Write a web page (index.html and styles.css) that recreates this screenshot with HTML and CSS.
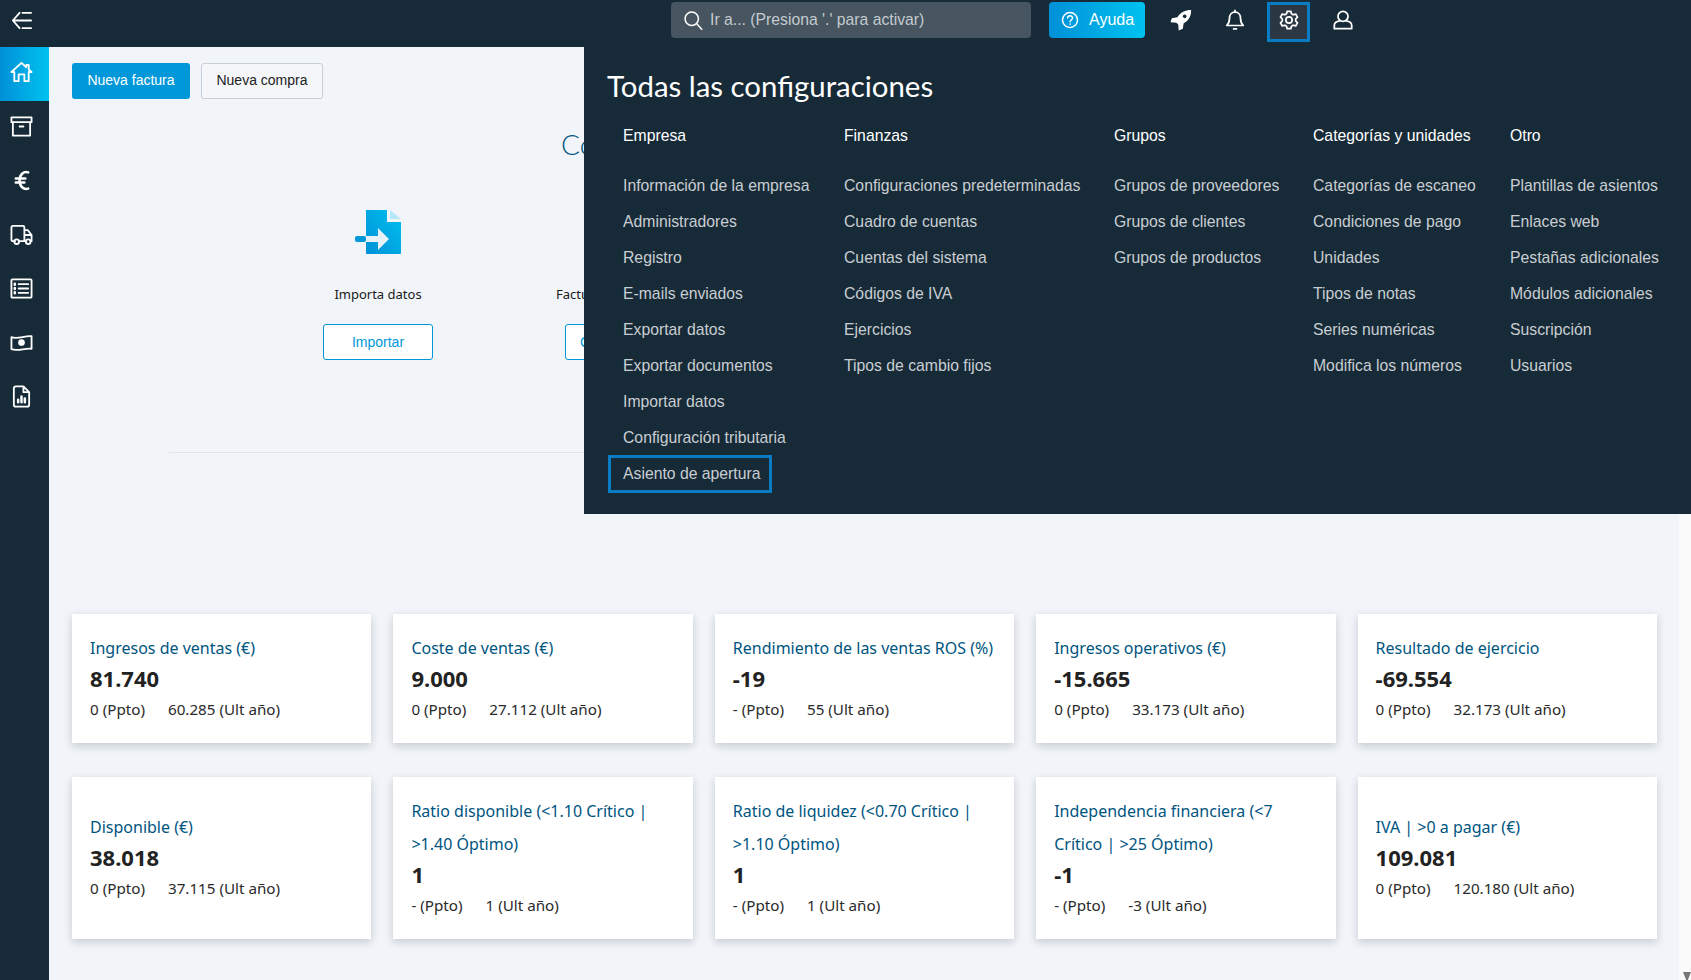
FILE: index.html
```html
<!DOCTYPE html>
<html lang="es">
<head>
  <meta charset="UTF-8" />
  <title>Inicio</title>
  <link rel="stylesheet" href="styles.css">
</head>
<body>
  <header class="topbar">
    <button class="toggle" aria-label="Menu">
      <svg class="icon" viewBox="0 0 24 24"><path d="M10 4 3 12l7 8M3 12h19M13 4h9M13 20h9"/></svg>
    </button>
    <div class="search">
      <svg class="search-icon" viewBox="0 0 24 24"><circle cx="10.5" cy="10.5" r="8"/><path d="m16.5 16.5 6 6.5"/></svg>
      <span>Ir a... (Presiona '.' para activar)</span>
    </div>
    <button class="help">
      <svg class="help-icon" viewBox="0 0 24 24"><circle cx="12" cy="12" r="10"/><path d="M8.800 9.400c0-4.200 6.600-4.200 6.600 0 0 2.600-3.300 2.600-3.300 5"/><path d="M12.100 17.200v.6"/></svg>
      Ayuda
    </button>
    <div class="top-icons">
      <div class="top-icon">
        <svg class="icon" viewBox="0 0 24 24"><path class="solid" d="M23 1c-6.500 0-11.500 2.500-15 8L2 10 .5 14.500l6.500.5 2 2 .5 6.500 4.500-2 .8-5.800C20.500 12.500 23.300 7.500 23 1Z"/><circle class="hole" cx="16" cy="8" r="2"/></svg>
      </div>
      <div class="top-icon">
        <svg class="icon" viewBox="0 0 24 24"><path d="M12 3.500c-4 0-6 3-6 6.500 0 4-1 6-3 8h18c-2-2-3-4-3-8 0-3.500-2-6.500-6-6.500ZM12 1.500v2M10.500 21.800h3"/></svg>
      </div>
      <div class="top-icon focused">
        <svg class="icon" viewBox="0 0 24 24"><circle cx="12" cy="12" r="3.400"/><path d="m10 2.500-.7 2.700-1.900 1.100-2.700-.8-2 3.400 2 2v2.200l-2 2 2 3.400 2.700-.8 1.900 1.100.7 2.700h4l.7-2.700 1.900-1.100 2.700.8 2-3.400-2-2v-2.200l2-2-2-3.400-2.700.8-1.900-1.100-.7-2.700Z"/></svg>
      </div>
      <div class="top-icon">
        <svg class="icon" viewBox="0 0 24 24"><circle cx="12" cy="8" r="5.500"/><path d="M8.500 13c-3.500.5-6 2-6 5v3.500h19V18c0-3-2.500-4.500-6-5"/></svg>
      </div>
    </div>
  </header>

  <div class="layout">
    <nav class="sidebar">
      <a class="side-item active"><svg class="icon" viewBox="0 0 24 24"><path d="M1.500 11.500 12 2l5 4.500V4h2.500v4.700l3 2.800h-3V21H15v-7H9v7H4.500v-9.500Z"/></svg></a>
      <a class="side-item"><svg class="icon" viewBox="0 0 24 24"><path d="M1.500 2.500h21v5h-21ZM3 7.500v14h18v-14M10 12h4"/></svg></a>
      <a class="side-item"><svg class="icon" viewBox="0 0 24 24"><path class="thick" d="M19 3.500C14 2 10 6 10 12s4 10 9 8.500M6 10h10M6 14h9"/></svg></a>
      <a class="side-item"><svg class="icon" viewBox="0 0 24 24"><path d="M5 19H3a1.500 1.500 0 0 1-1.500-1.500v-13A1.500 1.500 0 0 1 3 3h10.500A1.500 1.500 0 0 1 15 4.500V19H9.500M15 7.500h3.500l4 5V19h-1M15 12.500h7.500M15 19h2"/><circle cx="7" cy="19.500" r="2.400"/><circle cx="19" cy="19.500" r="2.400"/></svg></a>
      <a class="side-item"><svg class="icon" viewBox="0 0 24 24"><rect x="1.500" y="2.500" width="21" height="19" rx="1"/><path d="M9 7.500h10M9 12h10M9 16.500h10"/><path class="thick" d="M5 7v1M5 11.500v1M5 16v1"/></svg></a>
      <a class="side-item"><svg class="icon" viewBox="0 0 24 24"><path d="M1.500 6.500c7 2.500 14-2 21-1v13c-7-1-14 3-21 .5Z"/><circle class="solid" cx="12" cy="12" r="3.500"/></svg></a>
      <a class="side-item"><svg class="icon" viewBox="0 0 24 24"><path d="M14 1.500H6A2 2 0 0 0 4 3.500v17a2 2 0 0 0 2 2h12a2 2 0 0 0 2-2V7.500ZM14 1.500v6h6"/><path class="thick" d="M8.500 18v-2.500M12 18v-6M15.500 18v-4"/></svg></a>
    </nav>

    <main class="content">
      <div class="actions">
        <button class="btn-primary">Nueva factura</button>
        <button class="btn-plain">Nueva compra</button>
      </div>

      <h1 class="welcome">Co</h1>

      <div class="steps">
        <div class="step">
          <svg class="step-icon" viewBox="0 0 46 44">
            <defs>
              <linearGradient id="stepBlue" x1="0" y1="1" x2="1" y2="0">
                <stop offset="0" stop-color="#0090d7"/>
                <stop offset="1" stop-color="#00c2ef"/>
              </linearGradient>
            </defs>
            <path fill="url(#stepBlue)" d="M13 0h19v12h14v31a1 1 0 0 1-1 1H12a1 1 0 0 1-1-1V1a1 1 0 0 1 2-1Z"/>
            <path fill="#b5e8f8" d="M35 0l11 9H35Z"/>
            <rect fill="#0098d9" x="0" y="26" width="11" height="6" rx="2"/>
            <path fill="#e6f2f8" d="M11 26h12v-8l11 11-11 11v-8H11Z"/>
          </svg>
          <p>Importa datos</p>
          <button class="btn-outline">Importar</button>
        </div>
        <div class="step step-cut">
          <svg class="step-icon" viewBox="0 0 46 44"></svg>
          <p>Factura</p>
          <button class="btn-outline">Crear</button>
        </div>
        <div class="step"></div>
        <div class="step"></div>
        <div class="step"></div>
      </div>

      <hr class="divider">

      <section class="cards">
        <article class="card"><h3>Ingresos de ventas (€)</h3><strong>81.740</strong><p><span>0 (Ppto)</span><span>60.285 (Ult año)</span></p></article>
        <article class="card"><h3>Coste de ventas (€)</h3><strong>9.000</strong><p><span>0 (Ppto)</span><span>27.112 (Ult año)</span></p></article>
        <article class="card"><h3>Rendimiento de las ventas ROS (%)</h3><strong>-19</strong><p><span>- (Ppto)</span><span>55 (Ult año)</span></p></article>
        <article class="card"><h3>Ingresos operativos (€)</h3><strong>-15.665</strong><p><span>0 (Ppto)</span><span>33.173 (Ult año)</span></p></article>
        <article class="card"><h3>Resultado de ejercicio</h3><strong>-69.554</strong><p><span>0 (Ppto)</span><span>32.173 (Ult año)</span></p></article>
        <article class="card"><h3>Disponible (€)</h3><strong>38.018</strong><p><span>0 (Ppto)</span><span>37.115 (Ult año)</span></p></article>
        <article class="card"><h3>Ratio disponible (&lt;1.10 Crítico | &gt;1.40 Óptimo)</h3><strong>1</strong><p><span>- (Ppto)</span><span>1 (Ult año)</span></p></article>
        <article class="card"><h3>Ratio de liquidez (&lt;0.70 Crítico | &gt;1.10 Óptimo)</h3><strong>1</strong><p><span>- (Ppto)</span><span>1 (Ult año)</span></p></article>
        <article class="card"><h3>Independencia financiera (&lt;7 Crítico | &gt;25 Óptimo)</h3><strong>-1</strong><p><span>- (Ppto)</span><span>-3 (Ult año)</span></p></article>
        <article class="card"><h3>IVA | &gt;0 a pagar (€)</h3><strong>109.081</strong><p><span>0 (Ppto)</span><span>120.180 (Ult año)</span></p></article>
      </section>
    </main>

    <div class="scrollbar"><span class="scroll-down"></span></div>
  </div>

  <!-- settings menu, opened from the gear icon -->
  <div class="settings-menu">
    <h2>Todas las configuraciones</h2>
    <div class="settings-cols">
      <ul>
        <li class="col-head">Empresa</li>
        <li>Información de la empresa</li>
        <li>Administradores</li>
        <li>Registro</li>
        <li>E-mails enviados</li>
        <li>Exportar datos</li>
        <li>Exportar documentos</li>
        <li>Importar datos</li>
        <li>Configuración tributaria</li>
        <li class="focused-item">Asiento de apertura</li>
      </ul>
      <ul>
        <li class="col-head">Finanzas</li>
        <li>Configuraciones predeterminadas</li>
        <li>Cuadro de cuentas</li>
        <li>Cuentas del sistema</li>
        <li>Códigos de IVA</li>
        <li>Ejercicios</li>
        <li>Tipos de cambio fijos</li>
      </ul>
      <ul>
        <li class="col-head">Grupos</li>
        <li>Grupos de proveedores</li>
        <li>Grupos de clientes</li>
        <li>Grupos de productos</li>
      </ul>
      <ul>
        <li class="col-head">Categorías y unidades</li>
        <li>Categorías de escaneo</li>
        <li>Condiciones de pago</li>
        <li>Unidades</li>
        <li>Tipos de notas</li>
        <li>Series numéricas</li>
        <li>Modifica los números</li>
      </ul>
      <ul>
        <li class="col-head">Otro</li>
        <li>Plantillas de asientos</li>
        <li>Enlaces web</li>
        <li>Pestañas adicionales</li>
        <li>Módulos adicionales</li>
        <li>Suscripción</li>
        <li>Usuarios</li>
      </ul>
    </div>
  </div>
</body>
</html>
```

FILE: styles.css
```css
* {
  box-sizing: border-box;
}
html, body {
  height: 100%;
}
body {
  margin: 0;
  display: flex;
  flex-direction: column;
  overflow: hidden;
  font-family: "Liberation Sans", Arial, sans-serif;
  font-size: 14px;
  background: #f1f4f8;
}
button {
  font-family: inherit;
  cursor: pointer;
}
.icon {
  width: 23px;
  height: 23px;
  fill: none;
  stroke: #fff;
  stroke-width: 1.9;
  stroke-linejoin: round;
  stroke-linecap: round;
}
.icon .solid {
  fill: #fff;
  stroke: none;
}
.icon .hole {
  fill: #172a38;
  stroke: none;
}
.icon .thick {
  stroke-width: 2.6;
}

/* top bar */
.topbar {
  display: flex;
  align-items: flex-start;
  flex: 0 0 47px;
  background: #172a38;
}
.toggle {
  width: 49px;
  height: 40px;
  padding: 0 0 0 10px;
  display: flex;
  align-items: center;
  border: none;
  background: none;
}
.search {
  display: flex;
  align-items: center;
  gap: 7px;
  width: 360px;
  height: 36px;
  margin: 2px 0 0 622px;
  padding-left: 12px;
  border-radius: 4px;
  background: #46555f;
  color: #c4cacf;
  font-size: 15.75px;
}
.search-icon {
  width: 20px;
  height: 20px;
  fill: none;
  stroke: #fff;
  stroke-width: 1.8;
  stroke-linecap: round;
}
.help {
  display: flex;
  align-items: center;
  gap: 10px;
  width: 96px;
  height: 36px;
  margin: 2px 0 0 18px;
  padding-left: 12px;
  border: none;
  border-radius: 4px;
  background: linear-gradient(90deg, #0090d7, #00c2ef);
  color: #fff;
  font-size: 16px;
}
.help-icon {
  width: 18px;
  height: 18px;
  fill: none;
  stroke: #fff;
  stroke-width: 2;
  stroke-linecap: round;
}
.top-icons {
  display: flex;
  margin: 2px 0 0 9px;
}
.top-icon {
  display: flex;
  align-items: center;
  justify-content: center;
  width: 54px;
  height: 36px;
}
.top-icon .icon {
  width: 22px;
  height: 22px;
}
.top-icon.focused {
  width: 43px;
  height: 40px;
  margin: 0 6px 0 5px;
  padding-bottom: 4px;
  border: 3px solid #0a7cc4;
  background: #2b3844;
}

/* page body */
.layout {
  display: flex;
  flex: 1;
  min-height: 0;
}
.sidebar {
  flex: 0 0 49px;
  background: #172a38;
}
.side-item {
  display: flex;
  align-items: center;
  height: 54px;
  padding: 0 0 4px 10px;
}
.side-item.active {
  background: linear-gradient(90deg, #0090d7, #00c2ef);
}
.content {
  flex: 1;
  min-width: 0;
  padding: 16px 22px 0 23px;
}
.scrollbar {
  position: relative;
  flex: 0 0 12px;
  background: #fafafa;
}
.scroll-down {
  position: absolute;
  right: 0;
  bottom: -2px;
  border-left: 4.5px solid transparent;
  border-right: 4.5px solid transparent;
  border-top: 10px solid #777;
}
.actions {
  display: flex;
  gap: 11px;
}
.btn-primary, .btn-plain {
  height: 36px;
  padding: 0 0 2px;
  border-radius: 3px;
  font-size: 14px;
}
.btn-primary {
  width: 118px;
  border: none;
  background: #0098d9;
  color: #fff;
}
.btn-plain {
  width: 122px;
  border: 1px solid #c6ced8;
  background: #f4f6f9;
  color: #222;
}
.welcome {
  margin: 27px 0 0;
  padding-left: 489px;
  font-family: Lato, sans-serif;
  font-size: 28px;
  line-height: 36px;
  font-weight: 300;
  color: #00557f;
}
.steps {
  display: flex;
  justify-content: center;
  margin-top: 48px;
  padding-right: 5px;
}
.step {
  width: 242px;
  display: flex;
  flex-direction: column;
  align-items: center;
}
.step-icon {
  width: 46px;
  height: 44px;
}
.step p {
  margin: 30px 0 0;
  font-family: "Noto Sans", sans-serif;
  font-size: 13px;
  line-height: 20px;
  color: #1a1a1a;
}
.btn-outline {
  width: 110px;
  height: 36px;
  margin-top: 20px;
  padding-bottom: 2px;
  border: 1px solid #0098d9;
  border-radius: 3px;
  background: #fff;
  color: #0098d9;
  font-size: 14px;
}
/* second step sits mostly under the settings menu */
.step-cut {
  align-items: flex-start;
}
.step-cut p {
  margin-left: 57px;
}
.step-cut .btn-outline {
  margin-left: 66px;
  padding-left: 14px;
  text-align: left;
}
.divider {
  width: 1392px;
  height: 1px;
  margin: 92px auto 0;
  border: none;
  background: #dde2e7;
}
.cards {
  display: grid;
  grid-template-columns: repeat(5, 1fr);
  gap: 34px 22px;
  margin-top: 161px;
}
.card {
  display: flex;
  flex-direction: column;
  justify-content: center;
  padding: 17.5px 18px;
  background: #fff;
  box-shadow: 0 3px 8px rgba(40, 60, 80, 0.22);
  font-family: "Noto Sans", sans-serif;
}
.card h3 {
  margin: 0;
  font-size: 16px;
  line-height: 33px;
  font-weight: 400;
  color: #00557f;
}
.card strong {
  font-size: 22px;
  line-height: 26px;
  font-weight: 700;
  color: #222;
}
.card p {
  display: flex;
  gap: 23px;
  margin: 1px 0 0;
  font-size: 15.2px;
  line-height: 34px;
  color: #2a2a2a;
}

/* settings menu overlay */
.settings-menu {
  position: absolute;
  top: 47px;
  left: 584px;
  right: 0;
  height: 467px;
  padding: 22px 0 0 23px;
  background: #172a38;
  color: #fff;
}
.settings-menu h2 {
  margin: 0;
  font-family: Lato, sans-serif;
  font-size: 29.4px;
  line-height: 34px;
  font-weight: 400;
}
.settings-cols {
  display: grid;
  grid-template-columns: 221px 270px 199px 197px 1fr;
  margin: 15px 0 0 1px;
}
.settings-cols ul {
  margin: 0;
  padding: 0;
  list-style: none;
}
.settings-cols li {
  height: 36px;
  padding: 0 15px;
  line-height: 36px;
  font-size: 15.75px;
  color: #c9ced2;
  white-space: nowrap;
}
.settings-cols .col-head {
  height: 50px;
  color: #fff;
  line-height: 36px;
}
.settings-cols .focused-item {
  width: fit-content;
  height: 38px;
  margin-top: -1px;
  padding: 0 9px 0 12px;
  border: 3px solid #0a7cc4;
  line-height: 32px;
}
```
